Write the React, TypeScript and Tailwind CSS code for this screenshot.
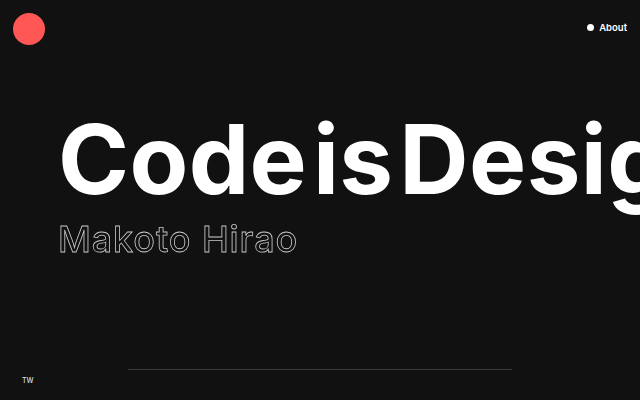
import * as React from 'react'

export default function App() {
  return (
    <div className="relative flex h-[400px] w-[640px] flex-col overflow-hidden bg-[#111111] font-['Inter',sans-serif] text-white antialiased">
      {/* Header */}
      <header className="flex items-start justify-between px-[13px] pt-[13px]">
        <div className="h-[32px] w-[32px] rounded-full bg-[#ff5656]" />
        <nav className="mt-[10px] flex items-center gap-[5px]">
          <span className="h-[7px] w-[7px] rounded-full bg-white" />
          <span className="text-[9.5px] font-semibold leading-none">About</span>
        </nav>
      </header>

      {/* Hero */}
      <main className="flex flex-1 flex-col pl-[58px] pt-[64px]">
        <h1 className="whitespace-nowrap text-[96px] font-bold leading-[100px] tracking-[0.004em] [word-spacing:-0.18em]">
          Code is Design
        </h1>
        <p className="mt-[12px] whitespace-nowrap text-[36px] font-medium leading-none tracking-[0.025em] text-transparent [-webkit-text-stroke:0.8px_#c8c8c8] [will-change:transform]">
          Makoto Hirao
        </p>
      </main>

      {/* Footer */}
      <footer className="relative h-[50px]">
        <div className="absolute left-[128px] top-[19px] h-px w-[384px] bg-[#3a3a3a]" />
        <span className="absolute left-[22px] top-[26px] text-[7px] font-medium text-[#dddddd]">TW</span>
      </footer>
    </div>
  )
}
